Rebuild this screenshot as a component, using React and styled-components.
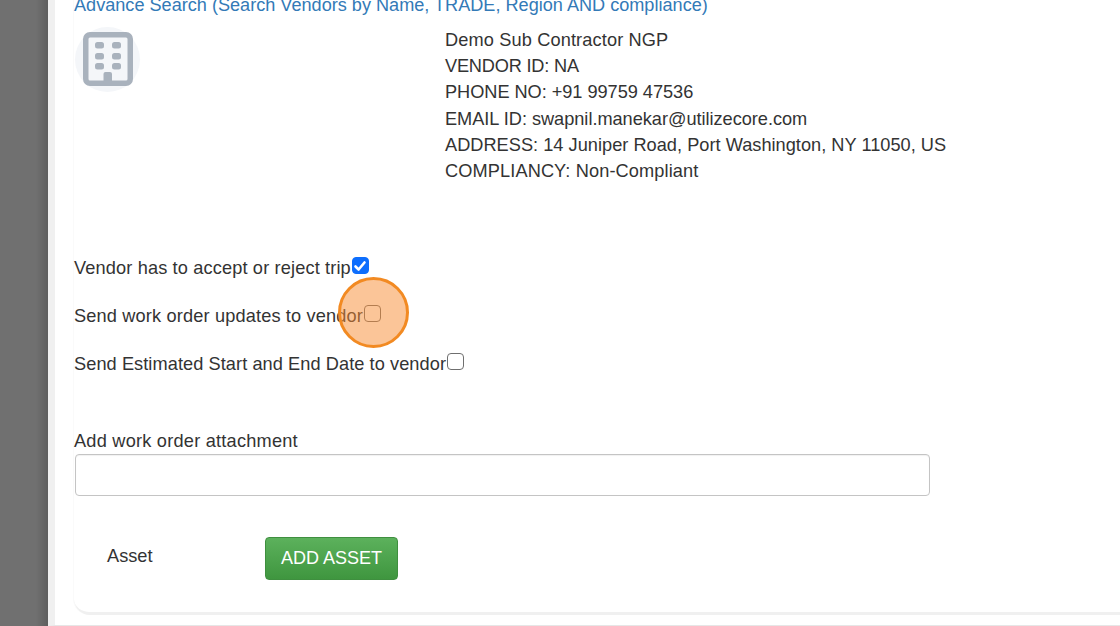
import React from "react";
import styled, { createGlobalStyle } from "styled-components";

const Global = createGlobalStyle`
  html, body { margin: 0; padding: 0; height: 626px; overflow: hidden; background: #fff; }
  #root { height: 626px; }
  * { box-sizing: border-box; }
`;

const Page = styled.div`
  display: flex;
  width: 1120px;
  height: 626px;
  overflow: hidden;
  font-family: "Liberation Sans", Arial, sans-serif;
  color: #333;
  font-size: 18.2px;
`;

const Backdrop = styled.div`
  width: 48px;
  flex: none;
  background: linear-gradient(90deg, #707070 0, #707070 36px, #5e5e5e 48px);
`;

const Modal = styled.div`
  flex: 1;
  background: #fff;
  border-left: 7px solid #f0f0f0;
  border-bottom: 1px solid #e6e6e6;
  height: 626px;
  overflow: hidden;
`;

const Card = styled.div`
  height: 623px;
  margin-left: 19px;
  margin-top: -8px;
  background: #fff;
  border-bottom: 3px solid #f0f0f0;
  border-bottom-left-radius: 16px;
  box-shadow: -1px 0 0 #fafafa;
  display: flex;
  flex-direction: column;
  align-items: flex-start;
`;

const SearchLink = styled.a`
  color: #337ab7;
  font-size: 18.12px;
  line-height: 26px;
  height: 26px;
  flex: none;
`;

const VendorRow = styled.div`
  display: flex;
  margin-top: 9px;
  height: 227px;
  flex: none;
`;

const Avatar = styled.div`
  width: 65px;
  height: 65px;
  margin-left: 1px;
  border-radius: 50%;
  background: #f4f6f9;
  display: flex;
  align-items: center;
  justify-content: center;
  flex: none;
`;

const BuildingSvg = styled.svg`
  margin-top: -2px;
  filter: blur(0.6px);
`;

const VendorInfo = styled.div`
  margin-left: 305px;
  line-height: 26.2px;
  color: #333;
  white-space: nowrap;
`;

const VendorLine = styled.div`
  letter-spacing: ${(p) => p.$spacing}px;
`;

const CheckRow = styled.label`
  display: flex;
  align-items: flex-start;
  height: 48px;
  line-height: 24px;
  white-space: nowrap;
  flex: none;
  letter-spacing: ${(p) => p.$spacing}px;
`;

const CheckLabel = styled.span`
  padding-top: 2px;
`;

const CheckBox = styled.span`
  width: 17px;
  height: 17px;
  margin: 3px 0 0 1px;
  flex: none;
  border-radius: 4px;
  border: 1px solid ${(p) => (p.$checked ? "#0d6efd" : "#6f6f6f")};
  background: ${(p) => (p.$checked ? "#0d6efd" : "#fff")};
  display: flex;
  align-items: center;
  justify-content: center;
`;

const AttachLabel = styled.div`
  margin-top: 31px;
  line-height: 24px;
  letter-spacing: 0.22px;
  flex: none;
`;

const AttachInput = styled.div`
  width: 855px;
  height: 42px;
  margin-top: 1px;
  margin-left: 1px;
  border: 1px solid #c4c4c4;
  border-radius: 4px;
  box-shadow: inset 0 1px 1px rgba(0, 0, 0, 0.06);
  flex: none;
`;

const AssetRow = styled.div`
  display: flex;
  align-items: center;
  margin-top: 41px;
  padding-left: 33px;
  flex: none;
`;

const AssetLabel = styled.span`
  width: 158px;
  position: relative;
  top: -2px;
`;

const AddButton = styled.button`
  width: 133px;
  height: 43px;
  padding: 0;
  font: inherit;
  font-size: 18px;
  color: #fff;
  background: linear-gradient(180deg, #5cb15c 0, #3f963f 100%);
  border: 1px solid #3f8f3f;
  border-radius: 4px;
`;

const Spotlight = styled.div`
  position: absolute;
  left: 338px;
  top: 277px;
  width: 71px;
  height: 71px;
  border-radius: 50%;
  border: 3px solid #f28a22;
  background: rgba(248, 140, 50, 0.5);
`;

const Stage = styled.div`
  position: relative;
`;

const BuildingIcon = () => (
  <BuildingSvg width="50" height="54" viewBox="0 0 50 54" fill="none">
    <path
      d="M7 2.75H43A4.25 4.25 0 0 1 47.25 7V47A4.25 4.25 0 0 1 43 51.25H7A4.25 4.25 0 0 1 2.75 47V7A4.25 4.25 0 0 1 7 2.75Z"
      stroke="#a9b2bd"
      strokeWidth="5.5"
    />
    <g fill="#a9b2bd">
      <rect x="12" y="10" width="9" height="6.5" rx="2.5" />
      <rect x="29" y="10" width="9" height="6.5" rx="2.5" />
      <rect x="12" y="21" width="9" height="6.5" rx="2.5" />
      <rect x="29" y="21" width="9" height="6.5" rx="2.5" />
      <rect x="12" y="31" width="9" height="6.5" rx="2.5" />
      <rect x="29" y="31" width="9" height="6.5" rx="2.5" />
      <rect x="20.5" y="40" width="8.5" height="12" rx="2" />
    </g>
  </BuildingSvg>
);

const Tick = () => (
  <svg width="14" height="14" viewBox="0 0 14 14" fill="none">
    <path d="M2.5 7.5L5.6 10.5L11.5 3.5" stroke="#fff" strokeWidth="2.6" strokeLinecap="round" strokeLinejoin="round" />
  </svg>
);

const checks = [
  { label: "Vendor has to accept or reject trip", checked: true, spacing: 0.14 },
  { label: "Send work order updates to vendor", checked: false, spacing: 0.15 },
  { label: "Send Estimated Start and End Date to vendor", checked: false, spacing: 0.07 },
];

const vendorLines = [
  { text: "Demo Sub Contractor NGP", spacing: 0.13 },
  { text: "VENDOR ID: NA", spacing: -0.2 },
  { text: "PHONE NO: +91 99759 47536", spacing: -0.04 },
  { text: "EMAIL ID: swapnil.manekar@utilizecore.com", spacing: -0.03 },
  { text: "ADDRESS: 14 Juniper Road, Port Washington, NY 11050, US", spacing: 0.02 },
  { text: "COMPLIANCY: Non-Compliant", spacing: 0.11 },
];

export default function App() {
  return (
    <Stage>
      <Global />
      <Page>
        <Backdrop />
        <Modal>
          <Card>
            <SearchLink>Advance Search (Search Vendors by Name, TRADE, Region AND compliance)</SearchLink>
            <VendorRow>
              <Avatar>
                <BuildingIcon />
              </Avatar>
              <VendorInfo>
                {vendorLines.map((l) => (
                  <VendorLine key={l.text} $spacing={l.spacing}>{l.text}</VendorLine>
                ))}
              </VendorInfo>
            </VendorRow>
            {checks.map((c) => (
              <CheckRow key={c.label} $spacing={c.spacing}>
                <CheckLabel>{c.label}</CheckLabel>
                <CheckBox $checked={c.checked}>{c.checked && <Tick />}</CheckBox>
              </CheckRow>
            ))}
            <AttachLabel>Add work order attachment</AttachLabel>
            <AttachInput />
            <AssetRow>
              <AssetLabel>Asset</AssetLabel>
              <AddButton>ADD ASSET</AddButton>
            </AssetRow>
          </Card>
        </Modal>
      </Page>
      <Spotlight />
    </Stage>
  );
}
